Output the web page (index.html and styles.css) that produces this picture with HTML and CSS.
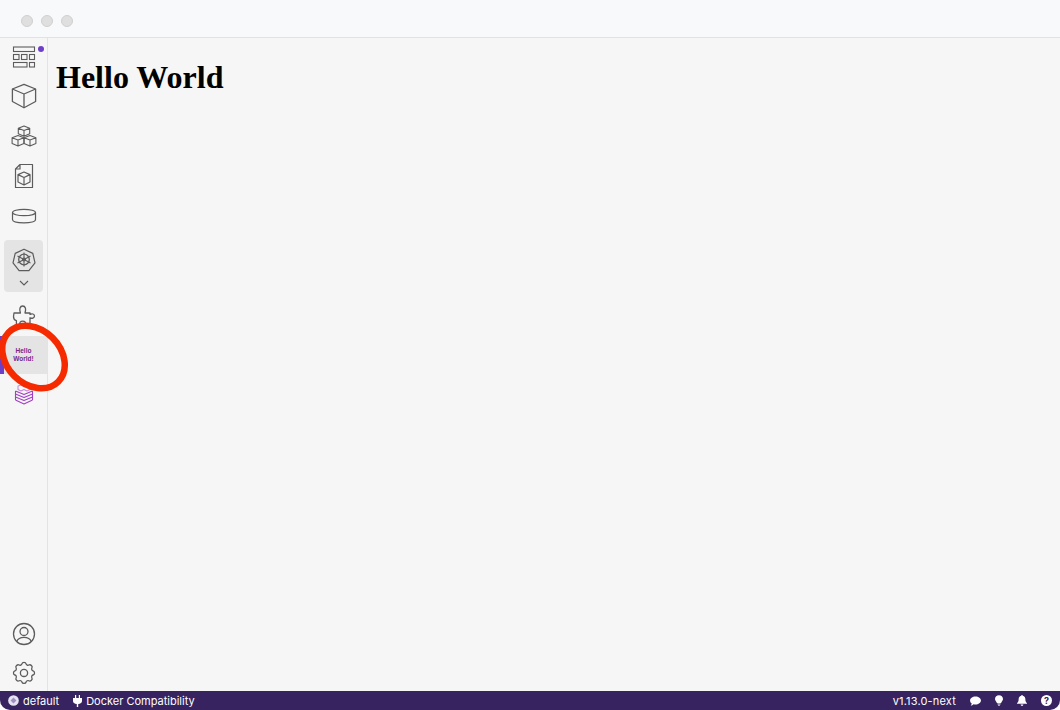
FILE: index.html
```html
<!DOCTYPE html>
<html lang="en">
<head>
  <meta charset="UTF-8" />
  <title>Podman Desktop</title>
  <link rel="stylesheet" href="styles.css">
</head>
<body>
  <div class="window">
    <div class="titlebar">
      <span class="light"></span>
      <span class="light"></span>
      <span class="light"></span>
    </div>

    <div class="main">
      <nav class="sidebar">
        <a class="item first">
          <svg width="24" height="24" viewBox="0 0 24 24" fill="none" stroke="#5c5c5c" stroke-width="1.1">
            <rect x="1.5" y="2" width="21" height="4.5"/>
            <rect x="1.5" y="9.5" width="5.5" height="5"/>
            <rect x="9.5" y="9.5" width="5.5" height="5"/>
            <rect x="17.5" y="9.5" width="5" height="5"/>
            <rect x="1.5" y="17.5" width="13.5" height="4.5"/>
            <rect x="17.5" y="17.5" width="5" height="4.5"/>
          </svg>
          <span class="dot"></span>
        </a>
        <a class="item">
          <svg width="26" height="26" viewBox="0 0 26 26" fill="none" stroke="#5c5c5c" stroke-width="1.3" stroke-linejoin="round">
            <path d="M13 1.3 L24.6 6 V18.5 L13 24.8 L1.4 18.5 V6 Z"/>
            <path d="M1.4 6 L13 11 L24.6 6 M13 11 V24.8"/>
          </svg>
        </a>
        <a class="item">
          <svg width="26" height="26" viewBox="0 0 26 26" fill="none" stroke="#5c5c5c" stroke-width="1.1" stroke-linejoin="round">
            <path d="M13 3 L18.7 5.2 V10.8 L13 13.3 L7.3 10.8 V5.2 Z M7.3 5.2 L13 7.5 L18.7 5.2 M13 7.5 V13.3"/>
            <path d="M7 12.5 L12.9 14.8 V20.5 L7 23 L1.1 20.5 V14.8 Z M1.1 14.8 L7 17 L12.9 14.8 M7 17 V23"/>
            <path d="M19 12.5 L24.9 14.8 V20.5 L19 23 L13.1 20.5 V14.8 Z M13.1 14.8 L19 17 L24.9 14.8 M19 17 V23"/>
          </svg>
        </a>
        <a class="item">
          <svg width="26" height="26" viewBox="0 0 26 26" fill="none" stroke="#5c5c5c" stroke-width="1.2" stroke-linejoin="round">
            <path d="M9 1.5 H21.5 V24.5 H4.5 V6 Z M9 1.5 V6 H4.5"/>
            <path d="M13 9 L19 11.6 V19 L13 22 L7 19 V11.6 Z M7 11.6 L13 14.5 L19 11.6 M13 14.5 V22"/>
          </svg>
        </a>
        <a class="item">
          <svg width="26" height="18" viewBox="0 0 26 18" fill="none" stroke="#5c5c5c" stroke-width="1.2">
            <ellipse cx="13" cy="5.5" rx="11.5" ry="3.2"/>
            <path d="M1.5 5.5 V12.5 C1.5 14.5 6.5 15.8 13 15.8 C19.5 15.8 24.5 14.5 24.5 12.5 V5.5"/>
          </svg>
        </a>

        <div class="group">
          <svg width="24" height="24" viewBox="0 0 24 24" fill="none" stroke="#5c5c5c" stroke-width="1.2" stroke-linejoin="round">
            <path d="M12 1.2 L20.8 5.4 L23 14.8 L16.9 22.6 H7.1 L1 14.8 L3.2 5.4 Z"/>
            <circle cx="12" cy="11.5" r="5.3" stroke-width="1.3"/>
            <circle cx="12" cy="11.5" r="1.5"/>
            <path d="M12 4.5 V18.5 M5.5 8 L18.5 15 M18.5 8 L5.5 15" stroke-width="1.1"/>
          </svg>
          <svg class="chevron" width="10" height="6" viewBox="0 0 10 6" fill="none" stroke="#5c5c5c" stroke-width="1.1">
            <path d="M1 1 L5 5 L9 1"/>
          </svg>
        </div>

        <a class="item puzzle">
          <svg width="26" height="26" viewBox="0 0 26 26" fill="none" stroke="#5c5c5c" stroke-width="1.3" stroke-linejoin="round">
            <path d="M3 10 H9.4 C8 6 9 3 11.7 3 C14.4 3 15.4 6 14 10 H19 V11.4 C21 10.2 23.5 11 23.5 13 C23.5 15 21 15.8 19 14.8 V22 H14.4 C15.2 19.6 14 18.2 11.7 18.2 C9.4 18.2 8.2 19.6 9 22 H5.4 V17.6 C3.6 17.2 2.5 15.5 2.5 13.5 Z"/>
          </svg>
        </a>
        <a class="item hello">
          <span class="hello-text">Hello<br>World!</span>
        </a>
        <a class="item stack">
          <svg width="20" height="22" viewBox="0 0 20 22" fill="none" stroke="#a23fc4" stroke-width="1.1" stroke-linejoin="round">
            <path d="M4 2 L7 1 L10 2.5 L13 1.5 L16 3 V5.5 L13 7 L10 5.5 L7 7 L4 5.5 Z" stroke="#c88adc"/>
            <path d="M1.5 7 L10 10.5 L18.5 7"/>
            <path d="M1.5 10 L10 13.5 L18.5 10"/>
            <path d="M1.5 13 L10 16.5 L18.5 13"/>
            <path d="M1.5 16 L10 20 L18.5 16"/>
            <path d="M1.5 7 V16 M18.5 7 V16"/>
          </svg>
        </a>

        <div class="spacer"></div>

        <a class="item user">
          <svg width="24" height="24" viewBox="0 0 24 24" fill="none" stroke="#5c5c5c" stroke-width="1.3">
            <circle cx="12" cy="12" r="10.5"/>
            <circle cx="12" cy="9.5" r="4"/>
            <path d="M4.8 19.6 C6 16.2 8.8 15.4 12 15.4 C15.2 15.4 18 16.2 19.2 19.6"/>
          </svg>
        </a>
        <a class="item gear">
          <svg width="24" height="24" viewBox="0 0 24 24" fill="none" stroke="#5c5c5c" stroke-width="1.3" stroke-linejoin="round">
            <path d="M9.9 2.8 C10.4 .9 13.6 .9 14.1 2.8 C14.4 4 15.8 4.6 16.9 4 C18.6 3 20.9 5.3 19.9 7 C19.3 8.1 19.9 9.5 21.1 9.8 C23 10.3 23 13.5 21.1 14 C19.9 14.3 19.3 15.7 19.9 16.8 C20.9 18.5 18.6 20.8 16.9 19.8 C15.8 19.2 14.4 19.8 14.1 21 C13.6 22.9 10.4 22.9 9.9 21 C9.6 19.8 8.2 19.2 7.1 19.8 C5.4 20.8 3.1 18.5 4.1 16.8 C4.7 15.7 4.1 14.3 2.9 14 C1 13.5 1 10.3 2.9 9.8 C4.1 9.5 4.7 8.1 4.1 7 C3.1 5.3 5.4 3 7.1 4 C8.2 4.6 9.6 4 9.9 2.8 Z"/>
            <circle cx="12" cy="11.9" r="3.6"/>
          </svg>
        </a>
      </nav>

      <main class="content">
        <h1>Hello World</h1>
      </main>
    </div>

    <footer class="statusbar">
      <div class="status-group">
        <span class="status-entry">
          <svg width="11" height="11" viewBox="0 0 12 12">
            <circle cx="6" cy="6" r="5.8" fill="#e6e3f0"/>
            <path d="M6 2.8 L9.2 6 L6 9.2 L2.8 6 Z" fill="#9d8ec4"/>
          </svg>
          default
        </span>
        <span class="status-entry">
          <svg width="9" height="12" viewBox="0 0 9 12" fill="#fff">
            <path d="M2 0 H3.2 V3 H5.8 V0 H7 V3 H9 V6 C9 7.8 7.6 8.8 5.2 9 V12 H3.8 V9 C1.4 8.8 0 7.8 0 6 V3 H2 Z"/>
          </svg>
          Docker Compatibility
        </span>
      </div>
      <div class="status-group">
        <span class="version">v1.13.0-next</span>
        <svg width="11" height="10" viewBox="0 0 12 11" fill="#fff">
          <path d="M6 .5 C9.3 .5 12 2.4 12 4.9 C12 7.4 9.3 9.3 6 9.3 C5.2 9.3 4.5 9.2 3.8 9 C3 9.8 1.9 10.4 .7 10.5 C1.4 9.8 1.8 9 1.9 8.2 C.7 7.4 0 6.2 0 4.9 C0 2.4 2.7 .5 6 .5 Z"/>
        </svg>
        <svg width="8" height="11" viewBox="0 0 10 13" fill="#fff">
          <path d="M5 0 C7.8 0 10 2 10 4.6 C10 6.6 8.2 7.6 7.6 9.5 H2.4 C1.8 7.6 0 6.6 0 4.6 C0 2 2.2 0 5 0 Z"/>
          <rect x="3" y="10.2" width="4" height="1.1"/>
          <rect x="3.8" y="11.8" width="2.4" height="1.1"/>
        </svg>
        <svg width="10" height="11" viewBox="0 0 11 12" fill="#fff">
          <path d="M5.5 0 C6 0 6.4 .4 6.4 .9 C8.2 1.3 9.2 2.8 9.2 4.6 C9.2 7 10 8 11 9 V9.7 H0 V9 C1 8 1.8 7 1.8 4.6 C1.8 2.8 2.8 1.3 4.6 .9 C4.6 .4 5 0 5.5 0 Z"/>
          <path d="M4 10.4 H7 C7 11.3 6.3 12 5.5 12 C4.7 12 4 11.3 4 10.4 Z"/>
        </svg>
        <span class="help">?</span>
      </div>
    </footer>

    <svg class="annotation" width="72" height="78" viewBox="0 0 72 78" fill="none">
      <ellipse cx="33.5" cy="39" rx="35" ry="27" transform="rotate(45 33.5 39)" stroke="#f62a00" stroke-width="6.5"/>
    </svg>
  </div>
</body>
</html>
```

FILE: styles.css
```css
* {
  box-sizing: border-box;
}
html, body {
  margin: 0;
  height: 100%;
  background: #fff;
}
.window {
  position: relative;
  width: 1060px;
  height: 710px;
  display: flex;
  flex-direction: column;
  overflow: hidden;
  border-radius: 0 0 10px 10px;
  background: #f6f6f6;
}
.titlebar {
  height: 38px;
  flex: none;
  display: flex;
  align-items: center;
  gap: 8px;
  padding: 4px 0 0 21px;
  background: #f8f9fb;
  border-bottom: 1px solid #e2e2e4;
}
.light {
  width: 12px;
  height: 12px;
  border-radius: 50%;
  background: #dfdfdf;
  border: 1px solid #d0d0d0;
}
.main {
  flex: 1;
  display: flex;
  min-height: 0;
}
.sidebar {
  width: 48px;
  flex: none;
  display: flex;
  flex-direction: column;
  align-items: stretch;
  border-right: 1px solid #e3e3e3;
}
.item {
  position: relative;
  height: 40px;
  flex: none;
  display: flex;
  align-items: center;
  justify-content: center;
}
.item.first {
  height: 38px;
}
.dot {
  position: absolute;
  top: 8px;
  left: 38px;
  width: 6px;
  height: 6px;
  border-radius: 50%;
  background: #6d3fc8;
}
.group {
  height: 52px;
  margin: 4px;
  display: flex;
  flex-direction: column;
  align-items: center;
  padding-top: 8px;
  background: #e4e4e4;
  border-radius: 4px;
}
.chevron {
  margin-top: 8px;
}
.hello {
  height: 38px;
  background: #e4e4e4;
  border-left: 4px solid #6d3fc8;
  padding-right: 4px;
}
.hello-text {
  font-family: "Liberation Sans", Arial, sans-serif;
  font-size: 6.5px;
  font-weight: bold;
  line-height: 8px;
  text-align: center;
  color: #74288c;
}
.stack {
  margin-top: 1px;
}
.spacer {
  flex: 1;
}
.user {
  height: 38px;
  margin-bottom: 2px;
}
.gear {
  height: 36px;
}
.content {
  flex: 1;
  padding: 8px;
}
h1 {
  margin: 13px 0 0;
  font-family: "Liberation Serif", "Times New Roman", serif;
  font-size: 32px;
  line-height: 37px;
  font-weight: bold;
  color: #000;
}
.statusbar {
  height: 19px;
  flex: none;
  display: flex;
  align-items: center;
  justify-content: space-between;
  padding: 0 8px;
  background: #36235f;
  color: #fff;
  font-family: "Inter", "Liberation Sans", sans-serif;
  font-size: 11px;
}
.status-group {
  display: flex;
  align-items: center;
  gap: 14px;
}
.status-entry {
  display: flex;
  align-items: center;
  gap: 4px;
}
.version {
  letter-spacing: 0.17px;
}
.help {
  width: 11px;
  height: 11px;
  border-radius: 50%;
  background: #fff;
  color: #36235f;
  font-size: 9px;
  font-weight: bold;
  line-height: 11px;
  text-align: center;
}
.annotation {
  position: absolute;
  left: 0;
  top: 318px;
}
```
